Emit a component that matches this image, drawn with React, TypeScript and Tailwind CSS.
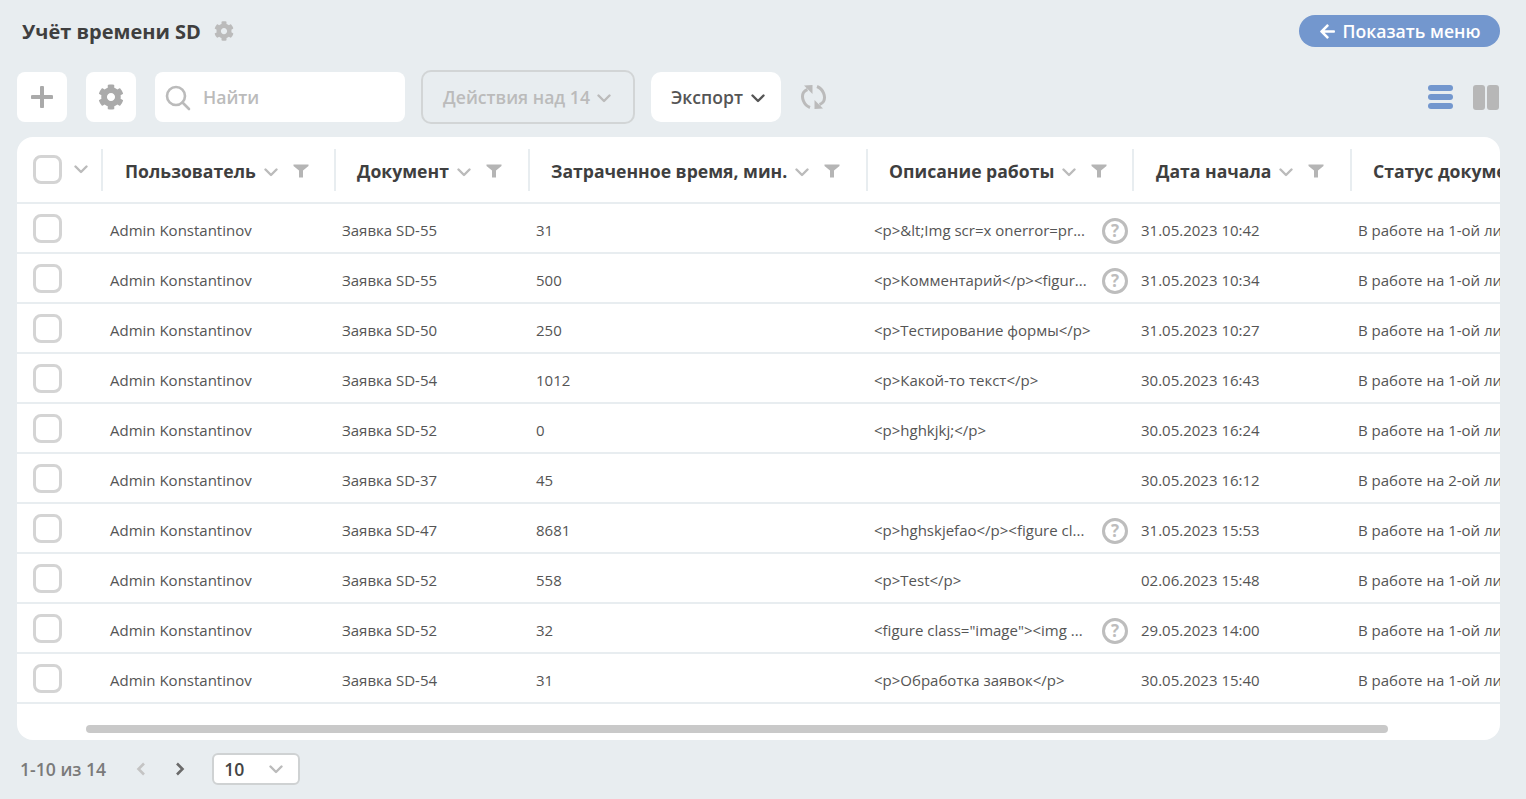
import React from "react";
import { FaArrowLeft, FaCog } from "react-icons/fa";

const rows = [
  ["Заявка SD-55", "31", "<p>&lt;Img scr=x onerror=pr...", true, "31.05.2023 10:42", "В работе на 1-ой линии"],
  ["Заявка SD-55", "500", "<p>Комментарий</p><figur...", true, "31.05.2023 10:34", "В работе на 1-ой линии"],
  ["Заявка SD-50", "250", "<p>Тестирование формы</p>", false, "31.05.2023 10:27", "В работе на 1-ой линии"],
  ["Заявка SD-54", "1012", "<p>Какой-то текст</p>", false, "30.05.2023 16:43", "В работе на 1-ой линии"],
  ["Заявка SD-52", "0", "<p>hghkjkj;</p>", false, "30.05.2023 16:24", "В работе на 1-ой линии"],
  ["Заявка SD-37", "45", "", false, "30.05.2023 16:12", "В работе на 2-ой линии"],
  ["Заявка SD-47", "8681", "<p>hghskjefao</p><figure cl...", true, "31.05.2023 15:53", "В работе на 1-ой линии"],
  ["Заявка SD-52", "558", "<p>Test</p>", false, "02.06.2023 15:48", "В работе на 1-ой линии"],
  ["Заявка SD-52", "32", "<figure class=\"image\"><img ...", true, "29.05.2023 14:00", "В работе на 1-ой линии"],
  ["Заявка SD-54", "31", "<p>Обработка заявок</p>", false, "30.05.2023 15:40", "В работе на 1-ой линии"],
] as const;

const cols = "grid grid-cols-[84px_233px_194px_338px_266px_218px_300px]";

function Chevron({ className = "", color = "#bbbbbb" }: { className?: string; color?: string }) {
  return (
    <svg width="14" height="9" viewBox="0 0 14 9" className={className} fill="none">
      <path d="M1.5 1.5 L7 7 L12.5 1.5" stroke={color} strokeWidth="2.4" strokeLinecap="round" strokeLinejoin="round" />
    </svg>
  );
}

function Funnel() {
  return (
    <svg width="16" height="14" viewBox="0 0 16 14" className="shrink-0">
      <path d="M0.5 0.5 H15.5 V2 L10 6.5 V13.5 H6 V6.5 L0.5 2 Z" fill="#b5b5b5" />
    </svg>
  );
}

function Check() {
  return <div className="h-[29px] w-[29px] rounded-[8px] border-[3px] border-[#d4d4d4] bg-white" />;
}

function Head({ title, last, wide }: { title: string; last?: boolean; wide?: boolean }) {
  return (
    <div className={`flex h-[42px] items-center whitespace-nowrap border-l-2 border-[#e8edf0] ${wide ? "pl-[22px]" : "pl-[21px]"}`}>
      <span className="mt-[4px] text-[17.6px] font-bold text-[#3f3f3f]">{title}</span>
      {!last && <Chevron className="ml-[8px] mt-[6px]" />}
      {!last && <span className="ml-[15px] mt-[2px]"><Funnel /></span>}
    </div>
  );
}

function Question() {
  return (
    <div className="flex h-[26px] w-[26px] shrink-0 items-center justify-center rounded-full border-[3px] border-[#bdbdbd] text-[17px] font-bold leading-none text-[#bdbdbd]">
      ?
    </div>
  );
}

export default function App() {
  return (
    <div className="h-[799px] w-[1526px] overflow-hidden bg-[#e8edf0] pl-[17px] pr-[26px] pt-[15px] font-['Open_Sans',sans-serif] text-[#555555]">
      <div className="flex h-[32px] items-center justify-between">
        <div className="flex items-center pl-[5px] pt-[1px]">
          <span className="text-[20px] font-bold text-[#3f3f3f]">Учёт времени SD</span>
          <FaCog className="mb-[2px] ml-[13px] text-[20px] text-[#bbbbbb]" />
        </div>
        <button className="flex h-[32px] w-[201px] items-center justify-center gap-[7px] rounded-full bg-[#7397ce] text-[17.6px] font-semibold text-white">
          <FaArrowLeft className="text-[17px]" />
          Показать меню
        </button>
      </div>

      <div className="mt-[23px] flex h-[54px] items-center">
        <button className="flex h-[50px] w-[50px] items-center justify-center rounded-[8px] bg-white">
          <svg width="22" height="22" viewBox="0 0 22 22">
            <path d="M11 1.5 V20.5 M1.5 11 H20.5" stroke="#aaaaaa" strokeWidth="4" strokeLinecap="round" />
          </svg>
        </button>
        <button className="ml-[19px] flex h-[50px] w-[50px] items-center justify-center rounded-[8px] bg-white">
          <FaCog className="text-[26px] text-[#aaaaaa]" />
        </button>
        <div className="ml-[19px] flex h-[50px] w-[250px] items-center rounded-[8px] bg-white pl-[10px]">
          <svg width="26" height="26" viewBox="0 0 26 26" fill="none" className="mt-[1px]">
            <circle cx="11" cy="11" r="9" stroke="#bbbbbb" strokeWidth="2.6" />
            <path d="M17.5 17.5 L24 24" stroke="#bbbbbb" strokeWidth="2.6" strokeLinecap="round" />
          </svg>
          <span className="ml-[12px] text-[17.6px] font-semibold text-[#bbbbbb]">Найти</span>
        </div>
        <button className="ml-[16px] flex h-[54px] w-[214px] items-center justify-center gap-[7px] rounded-[10px] border-2 border-[#d2d5d6] pr-[2px] text-[17.6px] font-semibold text-[#bbbbbb]">
          Действия над 14
          <Chevron className="mt-[2px]" />
        </button>
        <button className="ml-[16px] flex h-[50px] w-[130px] items-center justify-center gap-[8px] rounded-[10px] bg-white pl-[4px] text-[17.6px] font-semibold text-[#555555]">
          Экспорт
          <Chevron color="#555555" className="mt-[2px]" />
        </button>
        <svg width="27" height="26" viewBox="0 0 27 26" fill="none" className="ml-[19px]">
          <path d="M10 23.5 C3.5 21 1 13 3.5 8.5 C4.5 7 6 6 7.5 5.5" stroke="#bbbbbb" strokeWidth="3" />
          <path d="M4 1.5 L12.5 1 L12.5 10 Z" fill="#bbbbbb" />
          <path d="M17 2.5 C23.5 5 26 13 23.5 17.5 C22.5 19 21 20 19.5 20.5" stroke="#bbbbbb" strokeWidth="3" />
          <path d="M23 24.5 L14.5 25 L14.5 16 Z" fill="#bbbbbb" />
        </svg>
        <div className="ml-auto flex items-center">
          <div className="flex w-[25px] flex-col gap-[3px]">
            <div className="h-[6px] rounded-[3px] bg-[#7397ce]" />
            <div className="h-[6px] rounded-[3px] bg-[#7397ce]" />
            <div className="h-[6px] rounded-[3px] bg-[#7397ce]" />
          </div>
          <div className="ml-[20px] flex gap-[2px] pr-px">
            <div className="h-[25px] w-[12px] rounded-[3px] bg-[#b7b7b7]" />
            <div className="h-[25px] w-[12px] rounded-[3px] bg-[#b7b7b7]" />
          </div>
        </div>
      </div>

      <div className="mt-[13px] h-[603px] overflow-hidden rounded-[16px] bg-white">
        <div className={`${cols} h-[67px] items-center border-b-2 border-[#e8edf0]`}>
          <div className="flex items-center pl-[16px] pb-[1px]">
            <Check />
            <Chevron className="ml-[12px]" />
          </div>
          <Head title="Пользователь" wide />
          <Head title="Документ" />
          <Head title="Затраченное время, мин." />
          <Head title="Описание работы" />
          <Head title="Дата начала" wide />
          <Head title="Статус документа" last />
        </div>
        {rows.map((r, i) => (
          <div key={i} className={`${cols} h-[50px] items-center border-b-2 border-[#e8edf0] text-[15px] whitespace-nowrap`}>
            <div className="pt-[1px] pl-[16px]"><Check /></div>
            <div className="pl-[9px] pt-[5px]">Admin Konstantinov</div>
            <div className="pl-[8px] pt-[5px]">{r[0]}</div>
            <div className="pl-[8px] pt-[5px]">{r[1]}</div>
            <div className="flex items-center justify-between pl-[8px] pr-[4px] pt-[5px]">
              <span>{r[2]}</span>
              {r[3] && <Question />}
            </div>
            <div className="pl-[9px] pt-[5px]">{r[4]}</div>
            <div className="pl-[8px] pt-[5px]">{r[5]}</div>
          </div>
        ))}
        <div className="ml-[69px] mt-[21px] h-[8px] w-[1302px] rounded-full bg-[#c9c9c9]" />
      </div>

      <div className="mt-[13px] flex h-[32px] items-center">
        <span className="ml-[3px] text-[17.6px] font-semibold text-[#7a7a7a]">1-10 из 14</span>
        <svg width="12" height="16" viewBox="0 0 12 16" fill="none" className="ml-[29px]">
          <path d="M9 2.5 L3.5 8 L9 13.5" stroke="#c4c4c4" strokeWidth="2.6" />
        </svg>
        <svg width="12" height="16" viewBox="0 0 12 16" fill="none" className="ml-[27px]">
          <path d="M3 2.5 L8.5 8 L3 13.5" stroke="#6a6a6a" strokeWidth="2.6" />
        </svg>
        <div className="ml-[26px] flex h-[32px] w-[88px] items-center justify-between rounded-[6px] border-2 border-[#cfd2d3] bg-white pl-[10px] pr-[15px]">
          <span className="text-[17.6px] font-semibold text-[#444444]">10</span>
          <Chevron />
        </div>
      </div>
    </div>
  );
}
